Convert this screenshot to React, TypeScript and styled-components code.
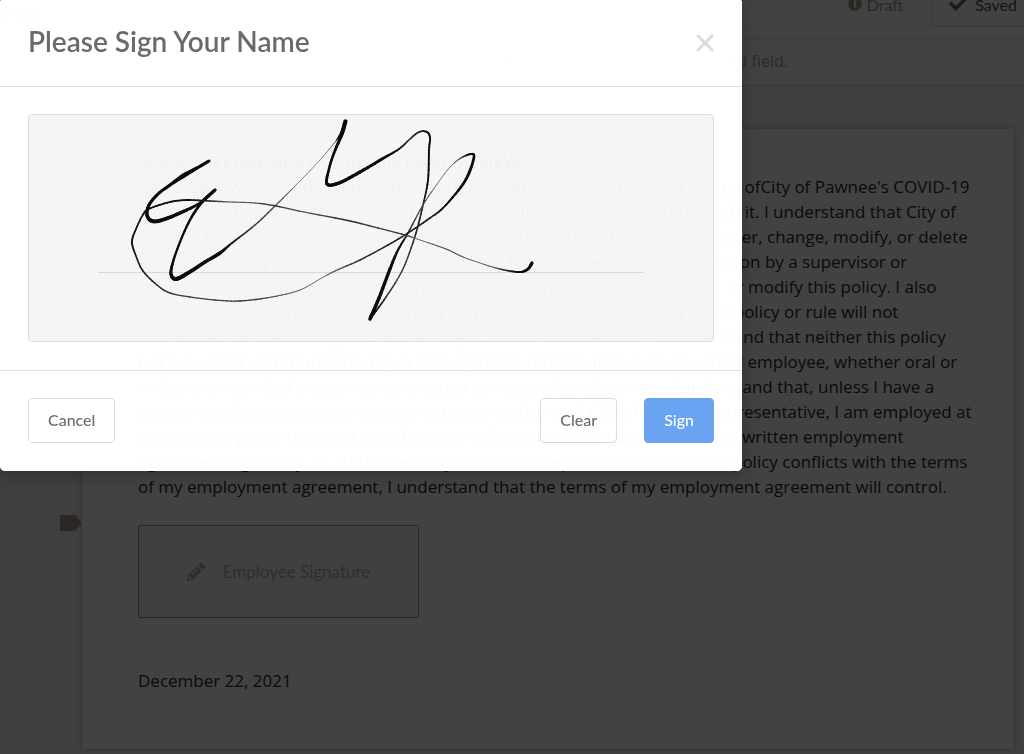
import React, { useState } from 'react';
import styled, { createGlobalStyle, css } from 'styled-components';
import { FaCheck, FaExclamationCircle, FaPencilAlt } from 'react-icons/fa';

const GlobalStyle = createGlobalStyle`
  *, *::before, *::after { box-sizing: border-box; }
  html, body { margin: 0; padding: 0; }
  body { overflow: hidden; background: #f2f2f2; }
  button { font: inherit; cursor: pointer; }
`;

const uiFont = css`
  font-family: Lato, 'Open Sans', sans-serif;
`;

const Page = styled.div`
  ${uiFont}
  display: flex;
  flex-direction: column;
  min-height: 100vh;
  background: #f2f2f2;
  overflow: hidden;
`;

const TopBar = styled.header`
  display: flex;
  align-items: flex-end;
  gap: 28px;
  height: 39px;
  padding: 0 0 11px;
  background: #fff;
  border-bottom: 1px solid #dcdcdc;
`;

const PageTitle = styled.h1`
  flex: 1;
  align-self: center;
  margin: 0;
  font-size: 24px;
  line-height: 28px;
  font-weight: 400;
  color: #888;
`;

const Status = styled.span`
  display: flex;
  align-items: center;
  gap: 5px;
  height: 44px;
  padding-bottom: 2px;
  font-size: 16px;
  color: #a49c88;

  svg { width: 14px; height: 14px; }
`;

const SavedButton = styled.button`
  display: flex;
  align-items: center;
  gap: 8px;
  height: 44px;
  margin-right: -16px;
  padding: 0 22px 2px 17px;
  font-size: 16px;
  color: #57544a;
  background: transparent;
  border: 1px solid #d4d4d4;
  border-radius: 4px;

  svg { width: 18px; height: 18px; color: #6f6858; }
`;

const Notice = styled.p`
  margin: 0;
  padding: 10px 236px 10px 0;
  text-align: right;
  font-family: 'Open Sans', 'Noto Sans', sans-serif;
  font-size: 16px;
  line-height: 25px;
  color: #a8a294;
  background: #fff;
  border-bottom: 1px solid #dcdcdc;
`;

const Paper = styled.main`
  flex: 1;
  margin: 44px 10px 5px 82px;
  padding: 20px 42px 54px 56px;
  font-family: 'Open Sans', 'Noto Sans', sans-serif;
  font-size: 17px;
  line-height: 25px;
  color: #2c2b28;
  background: #fff;
  box-shadow: 0 0 5px rgba(0, 0, 0, 0.24);
`;

const PaperHeading = styled.h2`
  margin: 0;
  font-size: 17px;
  line-height: 25px;
  font-weight: 600;
`;

const Clause = styled.p`
  margin: 0;
`;

const Line = styled.span`
  display: block;
  white-space: nowrap;
`;

const FieldRow = styled.div`
  position: relative;
  display: flex;
  margin-top: 26px;
`;

const FieldMarker = styled.span`
  position: absolute;
  top: -10px;
  left: -78px;
  width: 22px;
  height: 16px;
  background: #a89c88;
  clip-path: polygon(0 0, 70% 0, 100% 50%, 70% 100%, 0 100%);
`;

const SignatureField = styled.button`
  ${uiFont}
  display: flex;
  align-items: center;
  justify-content: center;
  gap: 18px;
  width: 281px;
  height: 93px;
  padding: 0;
  font-size: 17px;
  color: #b8b2a4;
  background: #f8f7f5;
  border: 1px solid #9c9078;
  border-radius: 2px;

  svg { width: 18px; height: 18px; }
`;

const SignedOn = styled.p`
  margin: 50px 0 0;
`;

const Overlay = styled.div`
  position: fixed;
  inset: 0;
  background: rgba(0, 0, 0, 0.74);
`;

const Dialog = styled.section`
  ${uiFont}
  position: absolute;
  top: 0;
  left: 0;
  width: 742px;
  max-width: 100%;
  color: #696a6c;
  background: rgba(255, 255, 255, 0.98);
  backdrop-filter: brightness(5);
  border-radius: 2px 2px 5px 5px;
  box-shadow: 0 4px 16px rgba(0, 0, 0, 0.25);
`;

const DialogHeader = styled.header`
  display: flex;
  align-items: center;
  justify-content: space-between;
  height: 87px;
  padding: 0 28px;
  border-bottom: 1px solid #dfe0e1;
`;

const DialogTitle = styled.h2`
  margin: 0;
  padding-bottom: 4px;
  font-size: 28px;
  line-height: 32px;
  font-weight: 600;
`;

const CloseButton = styled.button`
  display: flex;
  padding: 0;
  color: #d9dbdd;
  background: none;
  border: 0;
`;

const DialogBody = styled.div`
  padding: 27px 28px 28px;
`;

const SignaturePad = styled.div`
  background: rgba(0, 0, 0, 0.04);
  border: 1px solid #dcdedf;
  border-radius: 4px;

  svg { display: block; width: 100%; }
`;

const DialogFooter = styled.footer`
  display: flex;
  align-items: center;
  gap: 27px;
  padding: 27px 28px 28px;
  border-top: 1px solid #dfe0e1;
`;

const Button = styled.button<{ $primary?: boolean; $pushEnd?: boolean }>`
  height: 45px;
  padding: 0 19px 2px;
  font-size: 16px;
  font-weight: 500;
  color: ${(p) => (p.$primary ? '#fff' : '#6c6d6f')};
  background: ${(p) => (p.$primary ? '#69a3f1' : 'transparent')};
  border: 1px solid ${(p) => (p.$primary ? '#69a3f1' : '#dadbdc')};
  border-radius: 4px;
  margin-right: ${(p) => (p.$pushEnd ? 'auto' : '0')};
`;

type InkPoint = [x: number, y: number, width: number];

const signature: InkPoint[][] = [
  [
    [209, 161, 3], [197, 168, 3], [183, 176, 4.5], [170, 185, 3], [158, 194, 3], [149, 205, 3],
    [147, 215, 3.2], [152, 221, 3.8], [162, 220, 3.8], [180, 213, 3.4], [200, 203, 2.6], [215, 190, 3],
  ],
  [
    [215, 190, 3], [202, 202, 2.8], [190, 220, 2.4], [180, 242, 2.2], [173, 262, 2.4], [171, 274, 3],
    [176, 279, 4], [188, 273, 3.8], [205, 262, 3.4], [220, 253, 3.4], [232, 243, 1.8], [255, 225, 1.4],
    [275, 206, 1.3], [300, 181, 0.9], [320, 160, 0.8], [336, 141, 1],
  ],
  [[336, 141, 1], [341, 133, 2], [345, 121, 3]],
  [
    [346, 121, 3], [342, 134, 3.4], [334, 153, 2.6], [329, 169, 2.4], [327, 184, 3], [339, 183, 3.4],
    [360, 172, 3.2], [382, 159, 2.8], [399, 149, 1.8], [410, 139, 1.5], [419, 132, 1.6], [427, 132, 1.8],
    [430, 138, 1.8], [429, 150, 1.9], [428, 180, 1.9], [423, 205, 1.6], [416, 233, 1.6], [406, 262, 1.4],
    [397, 280, 1.4], [384, 300, 1.5], [370, 319, 2],
  ],
  [
    [370, 319, 3.6], [379, 298, 3.4], [390, 269, 3.2], [398, 250, 2.2], [408, 233, 1.6], [423, 205, 1.2],
    [440, 180, 0.9], [451, 166, 0.9], [461, 158, 1.2], [471, 154, 2], [474, 157, 2.4], [469, 173, 2.8],
    [461, 187, 2.6], [443, 208, 1.8], [430, 218, 1.6], [408, 233, 1.6], [388, 245, 1.6], [360, 260, 1.5],
    [335, 271, 1.2], [320, 279, 0.9], [300, 290, 1], [272, 297, 1.2], [240, 301, 1.4], [215, 300, 1.3],
    [190, 297, 1.3], [170, 293, 1.4], [157, 285, 1.5], [143, 271, 1.6], [136, 256, 1.6], [132, 242, 1.8],
    [136, 229, 1.7], [144, 213, 1.7], [151, 208, 1.8], [170, 202, 1.8], [187, 200, 1.8], [210, 201, 1.6],
    [230, 202, 1.1], [255, 203, 1.2], [276, 206, 1.4], [304, 212, 1.2], [350, 221, 1.5], [378, 228, 1.3],
    [405, 235, 1.4], [420, 240, 0.9], [446, 249, 1.2], [463, 257, 1.1], [480, 263, 0.9], [496, 268, 1.2],
    [510, 271, 1.6], [521, 272, 2], [528, 269, 2.6], [532, 263, 3.2],
  ],
];

const STEPS = 6;

const spline = (a: number, b: number, c: number, d: number, t: number) =>
  0.5 * (2 * b + (c - a) * t + (2 * a - 5 * b + 4 * c - d) * t * t + (3 * b - a - 3 * c + d) * t * t * t);

/* Turns a pen stroke into short round-capped pieces whose width follows the pen pressure. */
function inkPieces(points: InkPoint[]) {
  const dense: InkPoint[] = [];
  for (let i = 0; i < points.length - 1; i++) {
    const p0 = points[Math.max(i - 1, 0)];
    const p1 = points[i];
    const p2 = points[i + 1];
    const p3 = points[Math.min(i + 2, points.length - 1)];
    for (let s = 0; s < STEPS; s++) {
      const t = s / STEPS;
      dense.push([
        spline(p0[0], p1[0], p2[0], p3[0], t),
        spline(p0[1], p1[1], p2[1], p3[1], t),
        p1[2] + (p2[2] - p1[2]) * t,
      ]);
    }
  }
  dense.push(points[points.length - 1]);
  return dense.slice(1).map((p, i) => ({ from: dense[i], to: p }));
}

/* Light, fast parts of a stroke leave paler ink. */
function inkColor(width: number) {
  const level = Math.round(Math.max(12, Math.min(120, 12 + (1.8 - width) * 110)));
  return `rgb(${level}, ${level}, ${level})`;
}

function Ink() {
  return (
    <g strokeLinecap="round">
      {signature.map((stroke, s) =>
        inkPieces(stroke).map(({ from, to }, i) => (
          <line
            key={`${s}-${i}`}
            x1={from[0]}
            y1={from[1]}
            x2={to[0]}
            y2={to[1]}
            stroke={inkColor(to[2])}
            strokeWidth={to[2]}
          />
        )),
      )}
    </g>
  );
}

const clauseLines = [
  "I, Andrew Dwyer, acknowledge that on December 22, 2021, I received a copy ofCity of Pawnee's COVID-19",
  'Vaccination Policy and that I read it, understood it, and agree to comply with it. I understand that City of',
  'Pawnee has the maximum discretion permitted by law to interpret, administer, change, modify, or delete',
  'this policy at any time[ with or without notice]. No statement or representation by a supervisor or',
  'manager or any other employee, whether oral or written, can supplement or modify this policy. I also',
  'understand that any delay or failure by City of Pawnee to enforce any work policy or rule will not',
  "constitute a waiver of City of Pawnee's right to do so in the future. I understand that neither this policy",
  'nor any other communication by a management representative or any other employee, whether oral or',
  'written, is intended in any way to create a contract of employment. I understand that, unless I have a',
  'written employment agreement signed by an authorized City of Pawnee representative, I am employed at',
  'will and this policy does not modify my at-will employment status. If I have a written employment',
  'agreement signed by an authorized City of Pawnee representative and this policy conflicts with the terms',
  'of my employment agreement, I understand that the terms of my employment agreement will control.',
];

export default function App() {
  const [signed, setSigned] = useState(true);

  return (
    <>
      <GlobalStyle />
      <Page>
        <TopBar>
          <PageTitle>ings</PageTitle>
          <Status>
            <FaExclamationCircle aria-hidden />
            Draft
          </Status>
          <SavedButton type="button">
            <FaCheck aria-hidden />
            Saved
          </SavedButton>
        </TopBar>
        <Notice>To continue, please sign or complete each required field.</Notice>
        <Paper>
          <PaperHeading>ACKNOWLEDGEMENT OF RECEIPT AND REVIEW</PaperHeading>
          <Clause>
            {clauseLines.map((line) => (
              <Line key={line}>{line}</Line>
            ))}
          </Clause>
          <FieldRow>
            <FieldMarker />
            <SignatureField type="button">
              <FaPencilAlt aria-hidden />
              Employee Signature
            </SignatureField>
          </FieldRow>
          <SignedOn>December 22, 2021</SignedOn>
        </Paper>
      </Page>
      <Overlay />
      <Dialog role="dialog" aria-modal="true" aria-labelledby="sign-title">
        <DialogHeader>
          <DialogTitle id="sign-title">Please Sign Your Name</DialogTitle>
          <CloseButton type="button" aria-label="Close">
            <svg width="18" height="18" viewBox="0 0 18 18" stroke="currentColor" strokeWidth="3" strokeLinecap="round">
              <path d="M2 2 L16 16 M16 2 L2 16" />
            </svg>
          </CloseButton>
        </DialogHeader>
        <DialogBody>
          <SignaturePad>
            <svg viewBox="29 115 684 226" role="img" aria-label="Signature">
              <line x1="98" y1="272.5" x2="644" y2="272.5" stroke="#d6d8da" />
              {signed && <Ink />}
            </svg>
          </SignaturePad>
        </DialogBody>
        <DialogFooter>
          <Button type="button" $pushEnd>
            Cancel
          </Button>
          <Button type="button" onClick={() => setSigned(false)}>
            Clear
          </Button>
          <Button type="button" $primary>
            Sign
          </Button>
        </DialogFooter>
      </Dialog>
    </>
  );
}
